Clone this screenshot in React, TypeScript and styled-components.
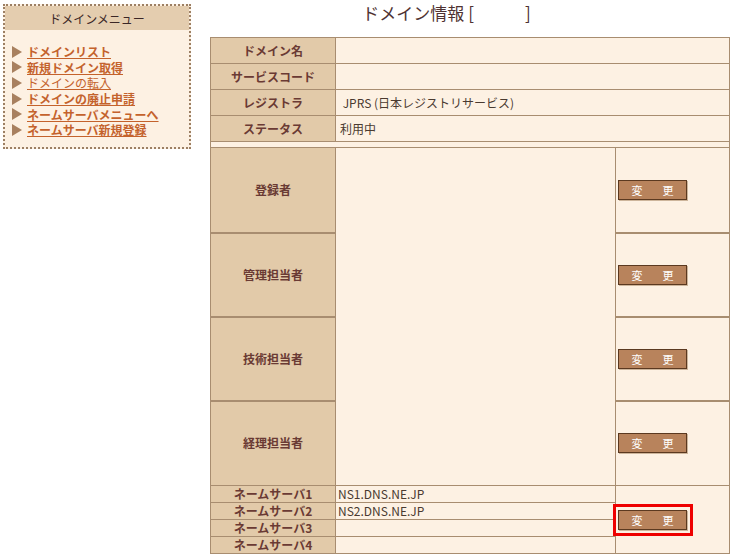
import React from 'react';
import styled, { createGlobalStyle } from 'styled-components';

const GlobalStyle = createGlobalStyle`
  body {
    margin: 0;
    background: #ffffff;
    font-family: "Noto Sans CJK JP", "Liberation Sans", sans-serif;
  }
`;

const Page = styled.div`
  display: flex;
  align-items: flex-start;
`;

const Menu = styled.nav`
  width: 184px;
  margin: 4px 0 0 3px;
  border: 2px dotted #9c7f63;
  background: #fdf1e3;
`;

const MenuHeader = styled.div`
  height: 24px;
  display: flex;
  align-items: center;
  justify-content: center;
  background: #e4cdaf;
  color: #3a2626;
  font-size: 12px;
`;

const MenuList = styled.ul`
  list-style: none;
  margin: 0;
  padding: 14px 0 9px 7px;
`;

const MenuItem = styled.li`
  display: flex;
  align-items: center;
  gap: 5px;
  height: 15.6px;

  &::before {
    content: '';
    border-left: 10px solid #a8805f;
    border-top: 6px solid transparent;
    border-bottom: 6px solid transparent;
  }
`;

const MenuLink = styled.a<{ $bold?: boolean }>`
  color: #c4622c;
  font-size: 12px;
  line-height: 15px;
  font-weight: ${(p) => (p.$bold ? 700 : 400)};
  text-decoration: underline;
  white-space: nowrap;
  cursor: pointer;
`;

const Main = styled.main`
  margin-left: 19px;
  width: 519px;
`;

const Title = styled.h1`
  height: 37px;
  margin: 0;
  padding-right: 46px;
  display: flex;
  justify-content: center;
  align-items: flex-start;
  color: #4f3232;
  font-size: 17px;
  font-weight: 400;
  line-height: 26px;
`;

const InfoTable = styled.table`
  width: 519px;
  border-collapse: collapse;
  table-layout: fixed;
  font-size: 12px;
`;

const Row = styled.tr<{ $h: number }>`
  height: ${(p) => p.$h}px;
`;

const Label = styled.th<{ $thick?: boolean }>`
  padding: 0;
  background: #e2caa9;
  border: 1px solid #a88d70;
  border-bottom-width: ${(p) => (p.$thick ? 2 : 1)}px;
  color: #6a3a34;
  font-weight: 700;
  line-height: 14px;
  text-align: center;
  white-space: nowrap;
`;

const Cell = styled.td<{ $pad?: number; $thick?: boolean }>`
  padding: 0 0 0 ${(p) => p.$pad ?? 4}px;
  background: #fdf1e3;
  border: 1px solid #a88d70;
  border-bottom-width: ${(p) => (p.$thick ? 2 : 1)}px;
  color: #4a3a30;
  line-height: 14px;
  vertical-align: middle;
  white-space: nowrap;
`;

const ChangeButton = styled.button`
  display: inline-flex;
  align-items: center;
  justify-content: center;
  gap: 20px;
  width: 69px;
  height: 20px;
  padding: 0;
  background: #b8835c;
  border: 1px solid #5b3920;
  box-shadow: 1px 1px 0 #cdb59b;
  color: #ffffff;
  font-family: "Noto Sans CJK JP", sans-serif;
  font-size: 11px;
  cursor: pointer;
`;

const Highlight = styled.span`
  position: relative;
  display: inline-block;
  line-height: 0;

  &::after {
    content: '';
    position: absolute;
    inset: -6px -6px -6px -5px;
    border: 3px solid #ee0000;
    pointer-events: none;
  }
`;

const Change = () => (
  <ChangeButton>
    <span>変</span>
    <span>更</span>
  </ChangeButton>
);

const menu = [
  { text: 'ドメインリスト', bold: true },
  { text: '新規ドメイン取得', bold: true },
  { text: 'ドメインの転入', bold: false },
  { text: 'ドメインの廃止申請', bold: true },
  { text: 'ネームサーバメニューへ', bold: true },
  { text: 'ネームサーバ新規登録', bold: true },
];

const info = [
  { label: 'ドメイン名', value: '' },
  { label: 'サービスコード', value: '' },
  { label: 'レジストラ', value: '\u00a0JPRS (日本レジストリサービス)' },
  { label: 'ステータス', value: '利用中' },
];

const contacts = [
  { label: '登録者', h: 85 },
  { label: '管理担当者', h: 84 },
  { label: '技術担当者', h: 84 },
  { label: '経理担当者', h: 85 },
];

const nameServers = ['NS1.DNS.NE.JP', 'NS2.DNS.NE.JP', '', ''];

export default function App() {
  return (
    <>
      <GlobalStyle />
      <Page>
        <Menu>
          <MenuHeader>ドメインメニュー</MenuHeader>
          <MenuList>
            {menu.map((m) => (
              <MenuItem key={m.text}>
                <MenuLink $bold={m.bold}>{m.text}</MenuLink>
              </MenuItem>
            ))}
          </MenuList>
        </Menu>

        <Main>
          <Title>ドメイン情報 [　　　]</Title>
          <InfoTable>
            <colgroup>
              <col style={{ width: 125 }} />
              <col style={{ width: 280 }} />
              <col style={{ width: 114 }} />
            </colgroup>
            <tbody>
              {info.map((r) => (
                <Row key={r.label} $h={26}>
                  <Label>{r.label}</Label>
                  <Cell colSpan={2}>{r.value}</Cell>
                </Row>
              ))}
              <Row $h={6}>
                <Cell colSpan={3} />
              </Row>
              {contacts.map((c, i) => (
                <Row key={c.label} $h={c.h}>
                  <Label $thick={i < 3}>{c.label}</Label>
                  {i === 0 && <Cell rowSpan={4} />}
                  <Cell $pad={2} $thick={i < 3}>
                    <Change />
                  </Cell>
                </Row>
              ))}
              {nameServers.map((ns, i) => (
                <Row key={i} $h={17}>
                  <Label>ネームサーバ{i + 1}</Label>
                  <Cell $pad={2}>{ns}</Cell>
                  {i === 0 && (
                    <Cell rowSpan={4} $pad={2}>
                      <Highlight>
                        <Change />
                      </Highlight>
                    </Cell>
                  )}
                </Row>
              ))}
            </tbody>
          </InfoTable>
        </Main>
      </Page>
    </>
  );
}
